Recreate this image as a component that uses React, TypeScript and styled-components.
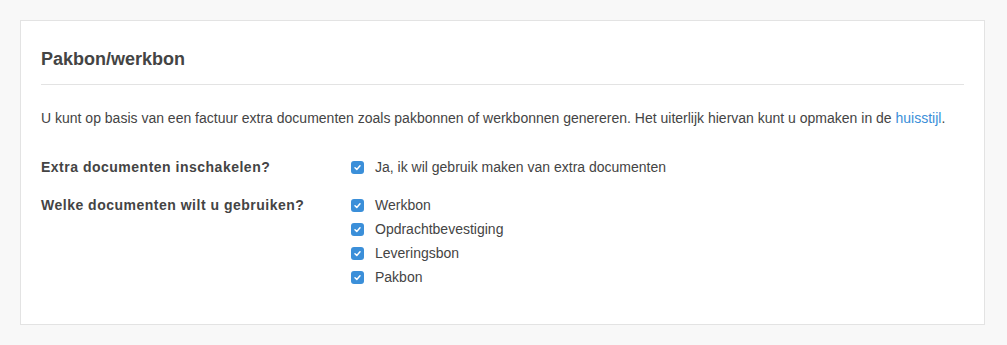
import React from 'react';
import styled, { createGlobalStyle } from 'styled-components';

const GlobalStyle = createGlobalStyle`
  html, body {
    margin: 0;
    padding: 0;
    background: #f8f8f8;
    font-family: "Liberation Sans", Arial, sans-serif;
    color: #444;
  }
`;

const Page = styled.div`
  padding: 20px 22px 20px 20px;
`;

const Card = styled.section`
  background: #fff;
  border: 1px solid #e3e3e3;
  padding: 20px 20px 35px 20px;
`;

const Heading = styled.h2`
  margin: 0;
  padding: 8px 0 14px;
  font-size: 18px;
  font-weight: bold;
  color: #444;
  border-bottom: 1px solid #e3e3e3;
`;

const Intro = styled.p`
  margin: 24px 0 28px;
  font-size: 14px;
  line-height: 18px;
`;

const Link = styled.a`
  color: #3a8ed8;
  text-decoration: none;
`;

const FieldRow = styled.div`
  display: grid;
  grid-template-columns: 310px 1fr;
  margin-bottom: 14px;
  &:last-child {
    margin-bottom: 0;
  }
`;

const Label = styled.div`
  font-size: 14px;
  font-weight: bold;
  letter-spacing: 0.5px;
  line-height: 24px;
`;

const Options = styled.div`
  display: flex;
  flex-direction: column;
`;

const Option = styled.label`
  display: flex;
  align-items: center;
  gap: 11px;
  height: 24px;
  font-size: 14px;
`;

const Box = styled.span`
  width: 13px;
  height: 13px;
  border-radius: 3px;
  background: #3b8fd9;
  display: flex;
  align-items: center;
  justify-content: center;
  flex-shrink: 0;
`;

const Check = () => (
  <Box>
    <svg width="9" height="9" viewBox="0 0 9 9">
      <path d="M2 4.7 L3.8 6.4 L7 2.8" fill="none" stroke="#fff" strokeWidth="1.5" strokeLinecap="round" strokeLinejoin="round" />
    </svg>
  </Box>
);

const documents = ['Werkbon', 'Opdrachtbevestiging', 'Leveringsbon', 'Pakbon'];

export default function App() {
  return (
    <>
      <GlobalStyle />
      <Page>
        <Card>
          <Heading>Pakbon/werkbon</Heading>
          <Intro>
            U kunt op basis van een factuur extra documenten zoals pakbonnen of werkbonnen genereren. Het uiterlijk
            hiervan kunt u opmaken in de <Link href="#">huisstijl</Link>.
          </Intro>
          <FieldRow>
            <Label>Extra documenten inschakelen?</Label>
            <Options>
              <Option>
                <Check />
                Ja, ik wil gebruik maken van extra documenten
              </Option>
            </Options>
          </FieldRow>
          <FieldRow>
            <Label>Welke documenten wilt u gebruiken?</Label>
            <Options>
              {documents.map((d) => (
                <Option key={d}>
                  <Check />
                  {d}
                </Option>
              ))}
            </Options>
          </FieldRow>
        </Card>
      </Page>
    </>
  );
}
